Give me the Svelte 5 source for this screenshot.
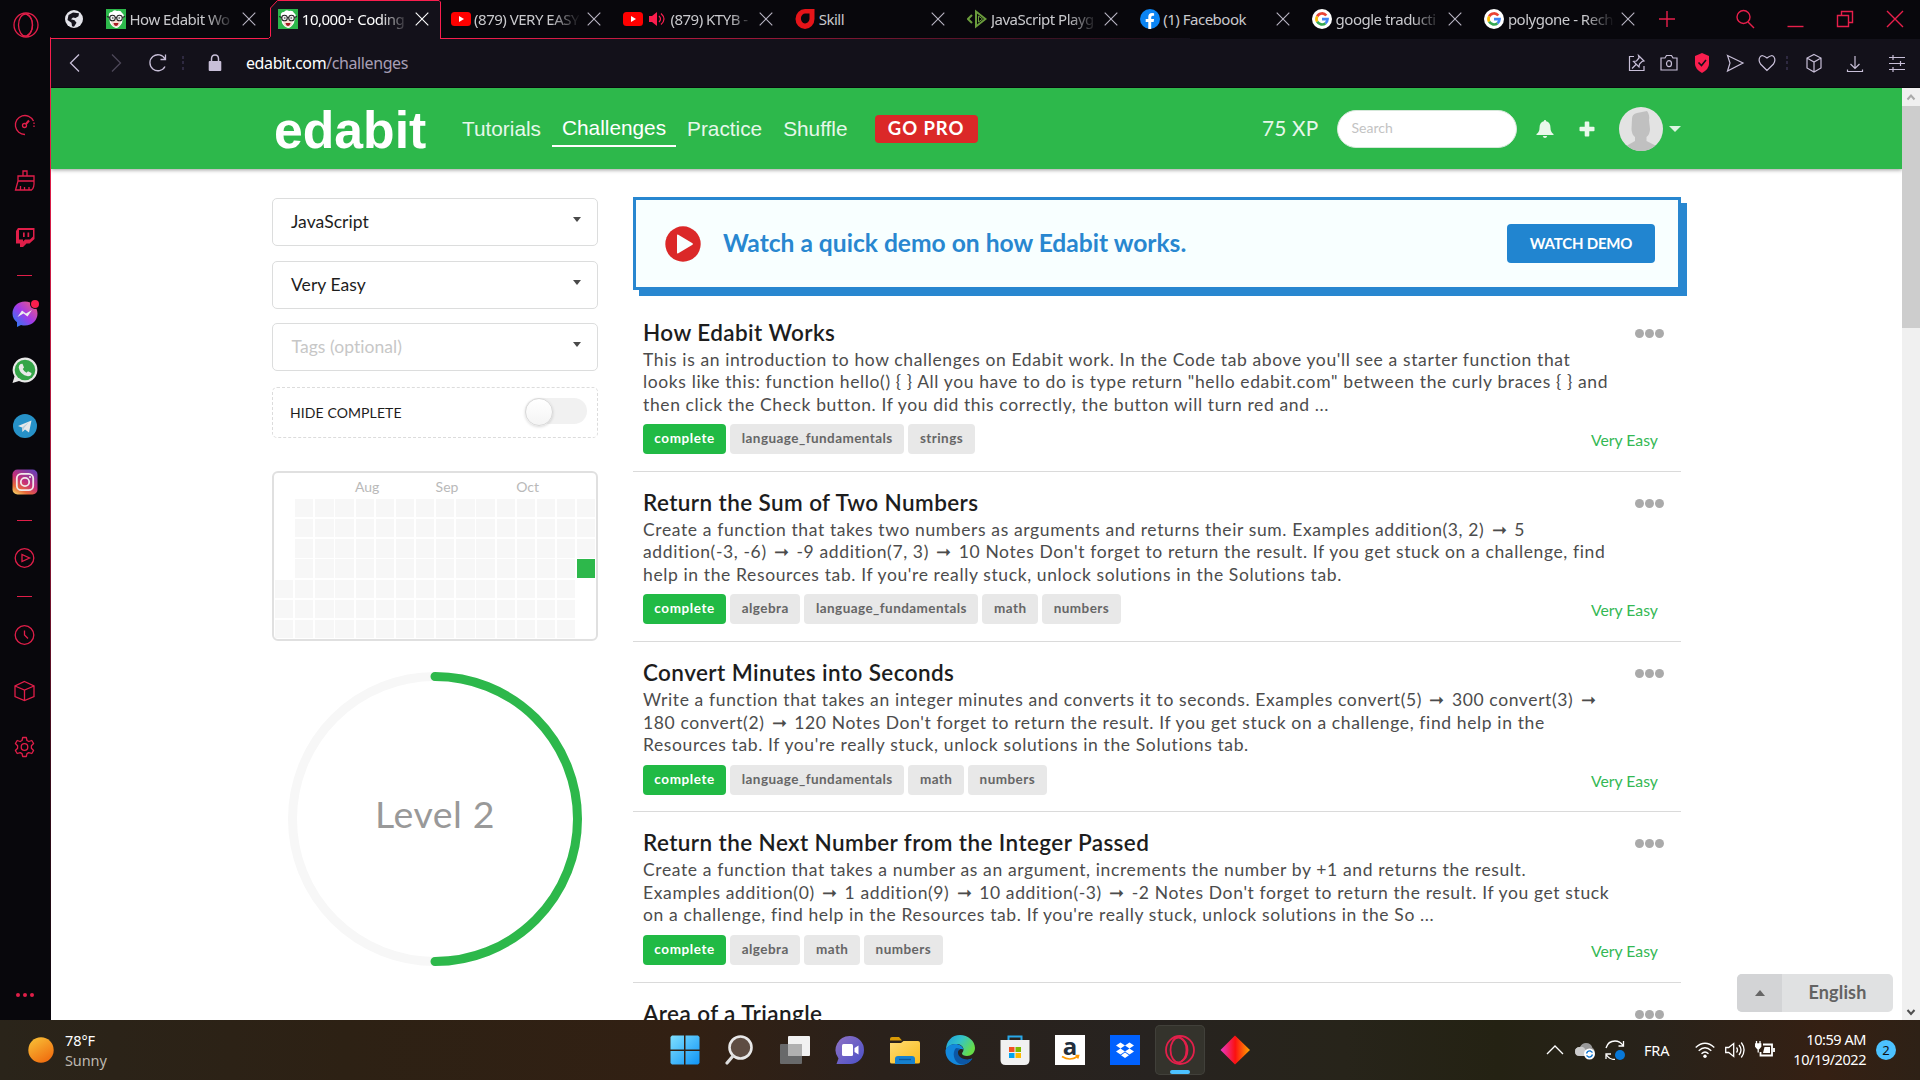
<script>
  const tabs = [
    { icon: 'edabit', title: 'How Edabit Wo', cut: true },
    { icon: 'edabit', title: '10,000+ Coding', active: true, cut: true },
    { icon: 'youtube', title: '(879) VERY EASY', cut: true },
    { icon: 'youtube', title: '(879) KTYB -', audio: true, cut: true },
    { icon: 'skill', title: 'Skill' },
    { icon: 'play-js', title: 'JavaScript Playg', cut: true },
    { icon: 'facebook', title: '(1) Facebook' },
    { icon: 'google', title: 'google traducti', cut: true },
    { icon: 'google', title: 'polygone - Rech', cut: true }
  ];

  const rail = [
    'speed', 'broom', 'twitch', '-', 'messenger', 'whatsapp', 'telegram', 'instagram',
    '-', 'player', '-', 'clock', 'cube', 'gear'
  ];

  const challenges = [
    {
      title: 'How Edabit Works',
      lines: [
        "This is an introduction to how challenges on Edabit work. In the Code tab above you'll see a starter function that",
        'looks like this: function hello() { } All you have to do is type return "hello edabit.com" between the curly braces { } and',
        'then click the Check button. If you did this correctly, the button will turn red and ...'
      ],
      tags: ['language_fundamentals', 'strings']
    },
    {
      title: 'Return the Sum of Two Numbers',
      lines: [
        'Create a function that takes two numbers as arguments and returns their sum. Examples addition(3, 2) ➞ 5',
        "addition(-3, -6) ➞ -9 addition(7, 3) ➞ 10 Notes Don't forget to return the result. If you get stuck on a challenge, find",
        "help in the Resources tab. If you're really stuck, unlock solutions in the Solutions tab."
      ],
      tags: ['algebra', 'language_fundamentals', 'math', 'numbers']
    },
    {
      title: 'Convert Minutes into Seconds',
      lines: [
        'Write a function that takes an integer minutes and converts it to seconds. Examples convert(5) ➞ 300 convert(3) ➞',
        "180 convert(2) ➞ 120 Notes Don't forget to return the result. If you get stuck on a challenge, find help in the",
        "Resources tab. If you're really stuck, unlock solutions in the Solutions tab."
      ],
      tags: ['language_fundamentals', 'math', 'numbers']
    },
    {
      title: 'Return the Next Number from the Integer Passed',
      lines: [
        'Create a function that takes a number as an argument, increments the number by +1 and returns the result.',
        "Examples addition(0) ➞ 1 addition(9) ➞ 10 addition(-3) ➞ -2 Notes Don't forget to return the result. If you get stuck",
        "on a challenge, find help in the Resources tab. If you're really stuck, unlock solutions in the So ..."
      ],
      tags: ['algebra', 'math', 'numbers']
    },
    { title: 'Area of a Triangle', lines: [], tags: [] }
  ];

  // Activity calendar: 16 weeks of 7 days, filled column by column.
  const cells = Array.from({ length: 112 }, (_, i) => {
    const week = Math.floor(i / 7);
    const day = i % 7;
    if ((week === 0 && day < 4) || (week === 15 && day > 3)) return 'none';
    return week === 15 && day === 3 ? 'done' : 'idle';
  });

  const apps = ['start', 'search', 'views', 'chat', 'folder', 'edge', 'store', 'amazon', 'dropbox', 'opera', 'diamond'];
</script>

{#snippet favicon(name)}
  <svg class="fav" viewBox="0 0 20 20">
    {#if name === 'edabit'}
      <rect width="20" height="20" fill="#2db84b" />
      <path d="M3 8Q2 3 6 3Q8 0 11 2Q15 1 16 4Q19 6 17 9L16 14Q13 19 10 19Q6 18 4 14Z" fill="#fff" />
      <path d="M5 11h10l-1 5q-4 4-8 0z" fill="#f6ddd3" />
      <circle cx="6.5" cy="9" r="2.8" fill="#eee" stroke="#222" stroke-width="1.1" />
      <circle cx="13.5" cy="9" r="2.8" fill="#eee" stroke="#222" stroke-width="1.1" />
      <circle cx="6.8" cy="9" r=".8" fill="#333" /><circle cx="13.2" cy="9" r=".8" fill="#333" />
      <path d="M1 7.500l2.700 1M19 7.500l-2.700 1M9.300 8.500h1.400" stroke="#222" stroke-width="1.1" />
      <path d="M7.500 14h5q-.5 3-2.500 3t-2.500-3z" fill="#a51d22" />
    {:else if name === 'youtube'}
      <rect y="3" width="20" height="14" rx="3.500" fill="#f00" />
      <path d="M8 7v6l5-3z" fill="#fff" />
    {:else if name === 'skill'}
      <path d="M10 0h9.500v10a9.500 10 0 1 1-9.500-10z" fill="#e51419" />
      <path d="M10.500 4.500h4V10a4.300 5 0 1 1-4-5.500z" fill="#09080d" />
    {:else if name === 'play-js'}
      <g fill="none" stroke="#6a9c3c" stroke-width="2">
        <path d="M5 6L1 10l4 4" /><path d="M9 2.500v15L18.500 10z" /><path d="M11.500 7v6l4-3z" stroke-width="1" />
      </g>
    {:else if name === 'facebook'}
      <circle cx="10" cy="10" r="10" fill="#0b84f3" />
      <path d="M8.300 20v-7H5.700v-3h2.600V8q0-3.900 3.800-3.900 1.200 0 2 .2v2.500h-1.400q-1.500 0-1.500 1.500V10h2.900l-.5 3h-2.400v7z" fill="#fff" />
    {:else if name === 'google'}
      <circle cx="10" cy="10" r="10" fill="#fff" />
      <g fill="none" stroke-width="2.700">
        <path d="M14.300 6.500A5.500 5.500 0 0 0 5.200 7.300" stroke="#ea4335" />
        <path d="M5.200 7.300A5.500 5.500 0 0 0 5.200 12.700" stroke="#fbbc05" />
        <path d="M5.200 12.700A5.500 5.500 0 0 0 13.500 14.200" stroke="#34a853" />
        <path d="M13.500 14.200A5.500 5.500 0 0 0 15.500 10.200H10" stroke="#4285f4" />
      </g>
    {/if}
  </svg>
{/snippet}

{#snippet railIcon(name)}
  <svg class="rail-icon" viewBox="0 0 26 26">
    {#if name === 'speed'}
      <g class="line">
        <path d="M13 22.500A9.500 9.500 0 1 1 21.500 9" /><path d="M22 10.500v6" stroke-dasharray="1.500 1.500" />
        <circle cx="12.500" cy="13.500" r="2" /><path d="M14 12l3-3.500" stroke-width="2" />
      </g>
    {:else if name === 'broom'}
      <g class="line"><path d="M6 8h16v5H6zM11 8V3h4v5M6 13L3.500 22h16q3-2 2.500-9M8.500 18v4M12.500 19v3M17 19v3" /></g>
    {:else if name === 'twitch'}
      <path d="M6 4h16.500v11l-5 4.500h-3L11 23H8v-3.500H4V7zM7 6v9.500h4v2l2-2h5l3-3V6zM11 8.500h1.700v4.500H11zm4.500 0h1.700v4.500h-1.700z" fill="#e01e49" fill-rule="evenodd" />
    {:else if name === 'messenger'}
      <path d="M13 .5C5.500.5.500 6 .5 12.500c0 4 1.700 6.500 4.500 8.800V26l4-2q2 .6 4 .6c7.500 0 12.500-5.500 12.500-12S20.500.5 13 .5z" fill="url(#msg)" />
      <path d="M5.500 16l4.500-6.500 4 3 6-3.500-4.500 6.500-4-3z" fill="#eee" />
      <circle cx="23" cy="3" r="5" fill="#08070c" /><circle cx="23" cy="3" r="4" fill="#fa1e4e" />
    {:else if name === 'whatsapp'}
      <path d="M13 .5a12.500 12.500 0 1 1-6 23.500L.5 26l2-6.500A12.500 12.500 0 0 1 13 .5z" fill="#e9e9e9" />
      <circle cx="13" cy="13" r="10.300" fill="#35a548" />
      <path d="M8.500 7l2-.3 1.500 3.800-1.200 1.500q1.200 2.500 3.700 3.700l1.500-1.500 3.500 1.800q0 3.200-3.500 3.200Q8 18 6.700 10.500 6.700 8 8.500 7z" fill="#e9e9e9" />
    {:else if name === 'telegram'}
      <circle cx="13" cy="13" r="12" fill="#2691c8" />
      <path d="M6 13l13.500-5.500L17 19.500l-4-3-2.500 2.500-.5-4.500z" fill="#e6e8ea" /><path d="M10 14.500l7-5.500-5 6-1.500 4z" fill="#b5cddb" />
    {:else if name === 'instagram'}
      <rect x=".5" y=".5" width="25" height="25" rx="5" fill="url(#insta)" />
      <g fill="none" stroke="#f1e9ea" stroke-width="1.800"><rect x="4.800" y="4.800" width="16.400" height="16.400" rx="4.500" /><circle cx="13" cy="13" r="4.200" /></g>
      <circle cx="18" cy="8" r="1.100" fill="#f1e9ea" />
    {:else if name === 'player'}
      <g class="line"><circle cx="12.500" cy="13" r="9.300" /><path d="M10 9.500v7l7.500-3.500z" /></g>
    {:else if name === 'clock'}
      <g class="line"><circle cx="12.500" cy="13" r="9.300" /><path d="M12.500 8.500V13l3.500 3.500" /></g>
    {:else if name === 'cube'}
      <g class="line"><path d="M12.500 3.500L22 8v10.500l-9.500 4-9.500-4V8zM3 8l9.500 4L22 8M12.500 12v10.500" /></g>
    {:else if name === 'gear'}
      <g class="line">
        <path d="M10.700 3.500h3.600l.7 3 1.800 1 3-1 1.800 3-2.200 2.200v2.500l2.200 2.300-1.800 3-3-.9-1.800 1-.7 2.900h-3.600l-.7-2.900-1.800-1-3 .9-1.800-3 2.200-2.300v-2.500L3.400 9.500l1.800-3 3 1 1.800-1z" stroke-linejoin="round" />
        <circle cx="12.500" cy="13" r="3.300" />
      </g>
    {/if}
  </svg>
{/snippet}

{#snippet appIcon(name)}
  <svg class="app-icon" viewBox="0 0 30 30">
    {#if name === 'start'}
      <g fill="url(#win)"><path d="M2 .5h12v14H.5V2zM15.500.5H28L29.500 2v12.500h-14zM.5 16H14v13.500H2L.5 28zM15.500 16h14v12L28 29.500H15.500z" /></g>
    {:else if name === 'search'}
      <circle cx="15.500" cy="12.500" r="11" fill="#5e4d43" stroke="#e8e8e8" stroke-width="2.600" />
      <path d="M8 21l-6 7" stroke="#ddd" stroke-width="3.200" stroke-linecap="round" />
    {:else if name === 'views'}
      <rect x="0" y="9" width="22" height="20" rx="1" fill="#68696a" />
      <rect x="8" y="1" width="22" height="20" rx="1" fill="#f1f1f1" /><path d="M8 9h14v12H8z" fill="#b0b0b0" />
    {:else if name === 'chat'}
      <path d="M15 1a14 14 0 1 1 0 28H1.500l2-5.500A14 14 0 0 1 15 1z" fill="url(#chat)" />
      <rect x="7" y="9" width="11" height="12" rx="1.500" fill="#fff" /><path d="M19.500 13l4-2.500v9l-4-2.500z" fill="#fff" />
    {:else if name === 'folder'}
      <path d="M0 4q0-2 2-2h7l3 3.500h-12z" fill="#d99a06" /><path d="M0 8h11l2.500-2H28q2 0 2 2v19q0 1.500-2 1.500H2Q0 28.500 0 27z" fill="url(#folder)" />
      <path d="M5 29v-5q0-3 3-3h14q3 0 3 3v5z" fill="#1681cf" /><path d="M9 24.500h12" stroke="#0a589c" stroke-width="1.300" />
    {:else if name === 'edge'}
      <path d="M1 15C1 6 7 0 15 0s15 6 15 13c0 5-4 8-8 8-3 0-5-1-5-2.500 0-1 1.500-1.500 1.500-4C18.500 11 15 9 11 9 6 9 2 12 1 15z" fill="url(#edgeTop)" />
      <path d="M.5 15Q3 9 10 9c5 0 8 2.500 8.500 5.500-2.500-1.500-6.500 0-6.500 5 0 4 4 7 9 6l6-2c-2 4-6.500 6.500-12 6.500C6 30 0 23 .5 15z" fill="#1388dc" />
      <path d="M11 13c-4 4-3 14 5 16.500 5 .5 9-2 11.500-6-6 2.500-14 0-14.500-5.500 0-2 .5-3.500 2-4.500z" fill="#0c57a5" />
    {:else if name === 'store'}
      <path d="M8.500 7V1.500h13V7" fill="none" stroke="#28a7e8" stroke-width="2" />
      <path d="M.5 5h29v20q0 5-5 5h-19q-5 0-5-5z" fill="#f1f1f1" />
      <path d="M9 12h5.500v5H9z" fill="#f25022" /><path d="M15.500 12H21v5h-5.500z" fill="#7fba00" /><path d="M9 18h5.500v5H9z" fill="#00a4ef" /><path d="M15.500 18H21v5h-5.500z" fill="#ffb900" />
    {:else if name === 'amazon'}
      <rect width="30" height="30" fill="#fff" />
      <text x="15" y="19.500" text-anchor="middle" font-family="Open Sans, sans-serif" font-weight="700" font-size="24" fill="#232f3e">a</text>
      <path d="M7 21.500q8 5 15.500 0M20.500 20.500h3l-.8 3" fill="none" stroke="#f90" stroke-width="1.700" />
    {:else if name === 'dropbox'}
      <rect width="30" height="30" fill="#0061fe" />
      <path d="M10.500 7.500l4.500 3-4.500 3-4.500-3zM19.500 7.500l4.500 3-4.500 3-4.500-3zM10.500 13.500l4.500 3-4.500 3-4.500-3zM19.500 13.500l4.500 3-4.500 3-4.500-3zM15 17.500l4 2.700-4 2.700-4-2.700z" fill="#fff" />
    {:else if name === 'opera'}
      <g fill="none" stroke="#e2204b" stroke-width="1.800"><ellipse cx="15" cy="15" rx="14" ry="14" /><ellipse cx="13.500" cy="15" rx="8" ry="12.500" /><path d="M16 3.500q6.500 3 6.500 11.500T16 26.500" /></g>
    {:else if name === 'diamond'}
      <path d="M15 .5L30 15 15 29.500.5 15z" fill="url(#diamond)" />
    {/if}
  </svg>
{/snippet}

<svg class="defs" width="0" height="0">
  <linearGradient id="msg" x1="1" y1="0" x2="0" y2="1"><stop offset="0" stop-color="#f7616e" /><stop offset=".5" stop-color="#a339e8" /><stop offset="1" stop-color="#1286f4" /></linearGradient>
  <linearGradient id="insta" x1=".8" y1="0" x2=".2" y2="1"><stop offset="0" stop-color="#6a40b5" /><stop offset=".5" stop-color="#c52f7a" /><stop offset=".8" stop-color="#ea6a3a" /><stop offset="1" stop-color="#f2c060" /></linearGradient>
  <linearGradient id="win" x1="0" y1="0" x2="1" y2="1"><stop offset="0" stop-color="#7fe0ff" /><stop offset="1" stop-color="#0f93f5" /></linearGradient>
  <linearGradient id="chat" x1="0" y1="0" x2="1" y2="1"><stop offset="0" stop-color="#8f72c4" /><stop offset="1" stop-color="#4a50c8" /></linearGradient>
  <linearGradient id="folder" x1="0" y1="0" x2="1" y2="1"><stop offset="0" stop-color="#ffdb73" /><stop offset="1" stop-color="#fabc1c" /></linearGradient>
  <linearGradient id="edgeTop" x1="0" y1="0" x2="1" y2=".5"><stop offset="0" stop-color="#1a9de0" /><stop offset=".5" stop-color="#34c3c8" /><stop offset="1" stop-color="#66dd48" /></linearGradient>
  <linearGradient id="diamond"><stop offset="0" stop-color="#e838c8" /><stop offset=".5" stop-color="#fb1010" /><stop offset="1" stop-color="#ffa600" /></linearGradient>
  <linearGradient id="sun" x1=".2" y1="0" x2=".8" y2="1"><stop offset="0" stop-color="#f8bd35" /><stop offset="1" stop-color="#f0690d" /></linearGradient>
  <linearGradient id="fade" gradientUnits="userSpaceOnUse" x1="440" y1="0" x2="1190" y2="0"><stop offset="0" stop-color="#fa1e4e" /><stop offset=".25" stop-color="#c01a40" /><stop offset="1" stop-color="#12101a" /></linearGradient>
</svg>

<div class="screen">
  <div class="window">
    <aside class="rail">
      <svg class="brand" viewBox="0 0 26 26"><g class="line"><circle cx="13" cy="13" r="12" /><ellipse cx="12.500" cy="13" rx="7" ry="11" /><path d="M14 2.500q5.500 3 5.500 10.500T14 23.500" /></g></svg>
      <div class="rail-items">
        {#each rail as item}
          {#if item === '-'}
            <div class="rail-gap"><span></span></div>
          {:else}
            <div class="rail-slot">{@render railIcon(item)}</div>
          {/if}
        {/each}
      </div>
      <div class="more"><i></i><i></i><i></i></div>
    </aside>

    <div class="main">
      <div class="tabbar">
        <svg class="outline" viewBox="50 0 1870 40">
          <path d="M268.500 40l2-3V8l7-7.500h162.500V40z" fill="#13111a" />
          <path d="M50 38.500h218.500l2-2V8l7-7.500h161.500l1.500 1.500v36.500" fill="none" stroke="#fa1e4e" />
          <rect x="440" y="38" width="750" height="1" fill="url(#fade)" />
        </svg>
        <div class="pinned">
          <svg viewBox="0 0 18 18"><circle cx="9" cy="9" r="9" fill="#e3e3ea" /><path d="M8 2.500l6 .8-.5 3-3 1.700-2.500-.5-2 1.700 3.500 1 2 2.500-2.500 4-2-.5-.5-3.500L2.500 10l1-5z" fill="#15131c" /></svg>
        </div>
        {#each tabs as tab}
          <div class="tab" class:active={tab.active}>
            {@render favicon(tab.icon)}
            {#if tab.audio}
              <svg class="audio" viewBox="0 0 16 16"><path d="M0 5h3l5-4v14l-5-4H0z" fill="#fa1e4e" /><path d="M10 5q3 3 0 6M12 2.500q6 5.500 0 11" fill="none" stroke="#fa1e4e" stroke-width="1.200" /></svg>
            {/if}
            <span class="tab-title" class:cut={tab.cut}>{tab.title}</span>
            <svg class="tab-x" viewBox="0 0 14 14"><path d="M.7.7l12.600 12.600M13.300.7L.7 13.300" /></svg>
          </div>
        {/each}
        <div class="controls">
          <svg class="plus" viewBox="0 0 20 20"><path d="M10 2v16M2 10h16" /></svg>
          <svg viewBox="0 0 20 20"><circle cx="8.500" cy="8" r="6.500" /><path d="M13 13l6 6" /></svg>
          <svg viewBox="0 0 20 20"><path d="M2.500 17.500h16" /></svg>
          <svg viewBox="0 0 20 20"><path d="M2.500 6.500h11v11h-11zM6.500 6.500v-4h11v11h-4" /></svg>
          <svg viewBox="0 0 20 20"><path d="M2 2l16 16M18 2L2 18" /></svg>
        </div>
      </div>

      <div class="addressbar">
        <svg class="nav-icon" viewBox="0 0 20 20"><path d="M14 1.500L5.500 10l8.500 8.500" /></svg>
        <svg class="nav-icon dim" viewBox="0 0 20 20"><path d="M6 1.500l8.500 8.500L6 18.500" /></svg>
        <svg class="nav-icon reload" viewBox="0 0 20 20"><path d="M17 13.500A8 8 0 1 1 17 6M17.500 1.500v5h-5" /></svg>
        <span class="divider"></span>
        <svg class="lock" viewBox="0 0 14 18"><path d="M3.500 8V5Q3.500 1 7 1t3.500 4v3" fill="none" stroke="#c8bfd8" stroke-width="1.500" /><rect x=".7" y="7" width="12.600" height="10" rx="1" fill="#c8bfd8" /></svg>
        <span class="url"><b>edabit.com</b>/challenges</span>
        <div class="actions">
          <svg viewBox="0 0 20 20"><path d="M7 3.500H2.500v14H17V13M11.500 2.500L17 8l-2 .5-2.500 2.500-.5 3L6.500 8.500l3-.5L12 5zM9 11.500l-4 4" /></svg>
          <svg viewBox="0 0 20 20"><path d="M2 5h4l1.500-2.500h5L14 5h4v12H2z" /><ellipse cx="10" cy="10.700" rx="2.500" ry="3" /></svg>
          <svg viewBox="0 0 20 20"><path d="M10 0l7 3v8q0 5-7 9-7-4-7-9V3z" fill="#fa1e4e" stroke="none" /><path d="M6.500 9.500l3 3 4.500-5.500" stroke="#13111a" stroke-width="1.600" /></svg>
          <svg viewBox="0 0 20 20"><path d="M2.500 2.500L18 10 2.500 18l2.500-8z" /></svg>
          <svg viewBox="0 0 20 20"><path d="M10 17.500L3.500 11Q1 7 3 4t7 1q5-4 7-1t-.5 7z" /></svg>
          <span class="divider"></span>
          <svg viewBox="0 0 20 20"><path d="M10 1.500l7 3.500v10l-7 4-7-4V5zM3 5l7 4 7-4M10 9v10" /></svg>
          <svg viewBox="0 0 20 20"><path d="M10 3v12M5.500 11l4.500 4.500 4.500-4.500M2.500 16.500v2h15v-2" /></svg>
          <svg viewBox="0 0 20 20"><path d="M2 4.500h16M2 10.500h16M2 16.500h16M6 2v5M13.500 8v5M6 14v5" /></svg>
        </div>
      </div>

      <div class="viewport">
        <div class="page">
          <header class="topbar">
            <div class="logo">edabit</div>
            <nav>
              <a>Tutorials</a><a class="current">Challenges</a><a>Practice</a><a>Shuffle</a>
            </nav>
            <span class="gopro">GO PRO</span>
            <div class="account">
              <span class="xp">75 XP</span>
              <div class="search">Search</div>
              <svg class="bell" viewBox="0 0 18 18"><path d="M9 0q1.200 0 1.200 1.300Q14.500 2.500 14.500 8q0 4 3 6v1H.5v-1q3-2 3-6 0-5.500 4.300-6.700Q7.800 0 9 0zM6.800 16h4.400q-.5 2-2.200 2t-2.200-2z" /></svg>
              <svg class="add" viewBox="0 0 16 16"><path d="M5.700 1.500Q5.700.500 6.500.500h3q.8 0 .8 1v4.200h4.200q1 0 1 .8v3q0 .8-1 .8h-4.200v4.200q0 1-.8 1h-3q-.8 0-.8-1v-4.200H1.500q-1 0-1-.8v-3q0-.8 1-.8h4.200z" /></svg>
              <svg class="avatar" viewBox="0 0 44 44"><circle cx="22" cy="22" r="22" fill="#e3e3e3" /><path d="M13 12q0-5 5-6l10-2q3 4 2 9l1 9q0 5-3.500 8v4l9 4.500q-6 5.500-14.500 5.500T8 38.500l8-4.500v-4q-3.500-3-3.500-8z" fill="#c0c0c0" /></svg>
              <span class="caret"></span>
            </div>
          </header>

          <div class="content">
            <aside class="filters">
              <div class="select">JavaScript<i></i></div>
              <div class="select">Very Easy<i></i></div>
              <div class="select empty">Tags (optional)<i></i></div>
              <div class="hide">HIDE COMPLETE<span class="toggle"></span></div>
              <div class="calendar">
                <div class="months"><span>Aug</span><span>Sep</span><span>Oct</span></div>
                <div class="cells">
                  {#each cells as cell}<i class={cell}></i>{/each}
                </div>
              </div>
              <div class="level">
                <svg viewBox="0 0 294 294">
                  <circle cx="147" cy="147" r="142.500" fill="none" stroke="#f7f7f7" stroke-width="9" />
                  <path d="M147 4.500a142.500 142.500 0 0 1 0 285" fill="none" stroke="#2db84b" stroke-width="9" stroke-linecap="round" />
                </svg>
                <span>Level 2</span>
              </div>
            </aside>

            <section class="feed">
              <div class="demo">
                <svg viewBox="0 0 36 36"><circle cx="18" cy="18" r="17.700" fill="#db2828" /><path d="M12 9.500q0-1.500 1.300-.7l14.200 8.500q1 .7 0 1.400l-14.200 8.500q-1.300.8-1.300-.7z" fill="#f8ffff" /></svg>
                <strong>Watch a quick demo on how Edabit works.</strong>
                <span class="watch">WATCH DEMO</span>
              </div>
              {#each challenges as c}
                <article>
                  <div class="head"><h2>{c.title}</h2><span class="dots"><i></i><i></i><i></i></span></div>
                  <div class="text">
                    {#each c.lines as line}
                      <p>{#each line.split('➞') as part, n}{#if n > 0}<span class="arrow">➞</span>{/if}{part}{/each}</p>
                    {/each}
                  </div>
                  {#if c.tags.length}
                    <div class="tags">
                      <span class="tag complete">complete</span>
                      {#each c.tags as tag}<span class="tag">{tag}</span>{/each}
                      <span class="difficulty">Very Easy</span>
                    </div>
                  {/if}
                </article>
              {/each}
            </section>
          </div>
          <div class="language"><span class="up"><i></i></span><span class="name">English</span></div>
        </div>
        <div class="scrollbar">
          <svg viewBox="0 0 18 18"><path d="M5.500 11.500L9 7.500l3.500 4" stroke="#aaa" /></svg>
          <div class="thumb"></div>
          <svg viewBox="0 0 18 18"><path d="M5.500 8L9 12l3.500-4" stroke="#505050" /></svg>
        </div>
      </div>
    </div>
  </div>

  <footer class="taskbar">
    <div class="weather">
      <svg viewBox="0 0 26 26"><circle cx="13" cy="13" r="12.700" fill="url(#sun)" /></svg>
      <div><p>78°F</p><p class="soft">Sunny</p></div>
    </div>
    <div class="apps">
      {#each apps as app}
        <div class="app" class:running={app === 'opera'}>{@render appIcon(app)}</div>
      {/each}
    </div>
    <div class="tray">
      <svg class="chev" viewBox="0 0 20 20"><path d="M2 14l8-8 8 8" /></svg>
      <svg viewBox="0 0 20 20"><path d="M5 16q-5 0-5-4.500T5 7q2-4 6-4 5 0 6.500 5 2.500 1 2 5-1 3-3 3z" fill="#999" stroke="none" /><path d="M5 16q-5 0-5-4.500T5 7q4-1 6 4l3 5z" fill="#ccc" stroke="none" /><circle cx="14.500" cy="14" r="5.500" fill="#fff" stroke="none" /><path d="M11.500 13.500q1-3 4-2.500l2 1.500M17.500 14.500q-1 3-4 2.500l-2-1.500" stroke="#0a74d0" /></svg>
      <svg viewBox="0 0 20 20"><path d="M1 8Q3 1 10 1q5 0 8 4.500M18.500 1v5h-5M1 19v-5h5M1.500 15q3 4.500 8.500 4.500" /><circle cx="15" cy="15" r="5" fill="#0878d8" stroke="none" /></svg>
      <span class="lang">FRA</span>
      <svg viewBox="0 0 20 20"><path d="M.7 7.500q9.300-8.500 18.600 0M3.700 10.700q6.300-6 12.600 0M6.500 13.700q3.500-3.500 7 0" /><circle cx="10" cy="16.300" r="1.700" fill="#fff" stroke="none" /></svg>
      <svg viewBox="0 0 20 20"><path d="M.7 7.500h3l5-4v13l-5-4h-3zM11.500 7.500q2 2.500 0 5M14 5q4 5 0 10M16.300 2.500q5.500 7.500 0 15" /></svg>
      <svg viewBox="0 0 20 20"><path d="M8 4.500h9v11H5.500V12M19 8v4" stroke-width="1.800" /><path d="M9.500 7H15v6H8z" fill="#fff" stroke="none" /><path d="M1.500 1v3M5 1v3M.7 4h5v2.500L4 8.500H2.500L.7 6.500zM3.200 8.500v4" fill="#fff" /></svg>
      <div class="clock"><p>10:59 AM</p><p>10/19/2022</p></div>
      <span class="badge">2</span>
    </div>
  </footer>
</div>

<style>
  :global(body) { margin: 0; overflow: hidden; }
  .screen { width: 1920px; height: 1080px; display: flex; flex-direction: column; overflow: hidden; font-family: Lato, sans-serif; }
  .screen * { box-sizing: border-box; }
  .defs { position: absolute; }
  p, h2 { margin: 0; }
  svg { display: block; flex: none; }
  .window { height: 1020px; display: flex; background: #08070c; }

  .rail { width: 51px; flex: none; height: 1020px; display: flex; flex-direction: column; align-items: center; padding: 12px 1px 23px 0; border-right: 1px solid; border-image: linear-gradient(#fa1e4e00 3.700%, #fa1e4e 3.800%, #a51a3d 45%, #3b0b1b 75%, #0a070d) 1; }
  .line { fill: none; stroke: #e01e49; stroke-width: 1.300; }
  .brand { width: 26px; height: 26px; margin-left: 2px; }
  .rail-items { margin-top: 59px; display: flex; flex-direction: column; }
  .rail-slot { height: 56.200px; display: flex; align-items: center; }
  .rail-icon { width: 26px; height: 26px; overflow: visible; }
  .rail-gap { height: 20px; display: flex; align-items: center; justify-content: center; }
  .rail-gap span { width: 15px; height: 1px; background: #e01e49; }
  .more { margin-top: auto; display: flex; gap: 3px; }
  .more i { width: 4px; height: 4px; border-radius: 50%; background: #e01e49; }

  .main { flex: 1; display: flex; flex-direction: column; min-width: 0; }
  .tabbar { position: relative; height: 39px; display: flex; font: 15px "Noto Sans", sans-serif; color: #c9c9cd; }
  .outline { position: absolute; left: -1px; top: 0; width: 1870px; height: 40px; }
  .pinned { width: 47px; padding: 10px 0 0 14px; }
  .pinned svg { width: 18px; height: 18px; }
  .tab { position: relative; width: 172.300px; flex: none; height: 38px; display: flex; align-items: center; padding: 0 14px 0 8px; }
  .fav { width: 20px; height: 20px; }
  .audio { width: 16px; height: 16px; margin: 0 2px 0 6px; }
  .tab-title { flex: 1; min-width: 0; margin: 0 3px 0 3.500px; white-space: nowrap; letter-spacing: -0.5px; }
  .cut { mask-image: linear-gradient(90deg, #000 70%, transparent 97%); }
  .active .tab-title { color: #fff; }
  .tab-x { width: 14px; height: 14px; stroke: #b9b5c4; stroke-width: 1.100; fill: none; }
  .active .tab-x { stroke: #fff; }
  .controls { position: relative; margin-left: auto; display: flex; gap: 30px; padding: 9px 15px 0 0; fill: none; stroke: #e81f4b; stroke-width: 1.400; }
  .controls svg { width: 20px; height: 20px; }
  .controls .plus { margin-right: 28px; }

  .addressbar { height: 49px; flex: none; display: flex; align-items: center; background: #13111a; padding-left: 14px; border-bottom: 1px solid #0b090f; }
  .nav-icon { width: 20px; height: 20px; margin-right: 21px; fill: none; stroke: #c8bfd8; stroke-width: 1.300; }
  .dim { stroke: #4c4758; }
  .reload { margin: 0 14px 0 1px; }
  .divider { width: 2px; height: 14px; background: repeating-linear-gradient(#2e2940 0 3px, transparent 3px 5.500px); }
  .lock { width: 14px; height: 18px; margin: 0 24px 0 24px; }
  .url { font: 16px "Noto Sans", sans-serif; letter-spacing: -0.4px; color: #a79fb5; }
  .url b { font-weight: 400; color: #fff; }
  .actions { margin-left: auto; display: flex; align-items: center; gap: 12.700px; padding-right: 13px; fill: none; stroke: #c8bfd8; stroke-width: 1.200; }
  .actions svg { width: 20px; height: 20px; }
  .actions .divider { margin: 0 3px 0 -4px; }
  .actions .divider ~ svg + svg { margin-left: 9px; }

  .viewport { flex: 1; min-height: 0; display: flex; background: #fff; }
  .page { position: relative; flex: 1; overflow: hidden; }
  .topbar { position: relative; height: 81px; background: #2db84b; box-shadow: 0 1px 4px rgba(0, 0, 0, .4); display: flex; align-items: center; padding: 0 221px 0 223px; color: #e6f7ea; }
  .logo { width: 178px; font: 700 51.700px/60px "Liberation Sans", sans-serif; color: #fff; padding-top: 2px; }
  nav { display: flex; font: 20.800px/26px "Liberation Sans", sans-serif; }
  nav a { padding: 0 10px; margin-right: 1px; height: 36px; padding-top: 5px; }
  nav .current { color: #fff; border-bottom: 2px solid #fff; padding-top: 4px; }
  .gopro { margin-left: 16px; width: 103px; height: 28px; border-radius: 4px; background: #db2828; color: #fff; font: 700 18.500px/27px Lato, sans-serif; letter-spacing: .9px; text-align: center; }
  .account { margin-left: auto; display: flex; align-items: center; }
  .xp { font-size: 20.800px; line-height: 24px; padding-bottom: 1px; width: 75px; letter-spacing: .2px; }
  .search { width: 180px; height: 38px; border-radius: 19px; background: #fff; border: 1px solid #d5e8d9; color: #c3c3c3; font-size: 14px; line-height: 34px; padding-left: 13.500px; }
  .account svg { fill: #e9f8ec; }
  .bell { width: 18px; height: 18px; margin-left: 19px; }
  .add { width: 16px; height: 16px; margin-left: 25px; }
  .avatar { width: 44px; height: 44px; margin-left: 24px; }
  .caret { margin-left: 6px; border: 6px solid transparent; border-top: 6px solid #dcf4e1; border-bottom: 0; }

  .content { display: flex; gap: 35px; padding: 28px 0 0 221px; }
  .filters { width: 326px; padding-top: 1px; display: flex; flex-direction: column; }
  .select { height: 48px; margin-bottom: 14.500px; border: 1px solid #dcdddd; border-radius: 5px; padding: 0 16px 1px 18px; display: flex; justify-content: space-between; align-items: center; font-size: 17.500px; letter-spacing: .06px; color: #1d1d1d; }
  .select i { border: 4.500px solid transparent; border-top: 5px solid #4a4a4a; border-bottom: 0; margin-top: -4px; }
  .empty { color: #c7c7c7; padding-left: 18.500px; }
  .hide { margin-top: 1.500px; height: 51px; border: 1px dashed #dcdcdc; border-radius: 5px; display: flex; align-items: center; justify-content: space-between; padding: 0 10px 0 17px; font-size: 14px; letter-spacing: .1px; color: #1d1d1d; }
  .toggle { width: 62px; height: 26px; margin-top: -3px; border-radius: 13px; background: #f1f1f1; }
  .toggle::before { content: ""; display: block; width: 26px; height: 26px; border-radius: 50%; background: linear-gradient(#fff, #f4f4f4); border: 1px solid #d8d8d8; box-shadow: 0 1px 3px rgba(0, 0, 0, .15); }
  .calendar { margin-top: 33px; height: 170px; border: 2px solid #e0e0e0; border-radius: 6px; padding: 3px 1px 0; }
  .months { height: 23px; display: flex; gap: 80.600px; padding-left: 80px; font-size: 14px; line-height: 22px; color: #b9b9b9; }
  .months span { width: 0; }
  .cells { display: grid; grid-auto-flow: column; grid-template-rows: repeat(7, 18.300px); grid-auto-columns: 18.300px; gap: 1.850px; }
  .idle { background: #f7f7f7; }
  .done { background: #2db84b; }
  .level { margin: 31px 0 0 16px; width: 294px; height: 294px; display: grid; place-items: center; }
  .level svg, .level span { grid-area: 1 / 1; }
  .level span { font-size: 37.500px; letter-spacing: .55px; color: #999; margin-top: -12px; }

  .feed { width: 1048px; }
  .demo { height: 93px; margin-bottom: 11.600px; border: 3px solid #2887d0; background: #f8ffff; box-shadow: 6px 6px 0 #2887d0; display: flex; align-items: center; padding: 0 23px 0 29px; color: #2887d0; }
  .demo svg { width: 36px; height: 36px; }
  .demo strong { font-size: 24.600px; margin: -2px 0 0 22px; white-space: nowrap; }
  .watch { margin-left: auto; width: 148px; height: 39px; border-radius: 4px; background: #2185d0; color: #fff; font-weight: 700; font-size: 15px; letter-spacing: -.2px; line-height: 39px; text-align: center; }
  article { height: 170.250px; border-bottom: 1px solid #dadada; padding: 18px 10px 0; }
  .head { height: 29px; display: flex; justify-content: space-between; }
  h2 { font-size: 22.500px; line-height: 26.500px; font-weight: 600; letter-spacing: .4px; color: #1d1d1d; white-space: nowrap; }
  .dots { display: flex; gap: 1px; padding: 9px 7px 0 0; }
  .dots i { width: 9px; height: 9px; border-radius: 50%; background: #aaa; }
  .text { font-size: 17.500px; line-height: 22.500px; letter-spacing: .62px; color: #4c4c4c; white-space: nowrap; }
  .arrow { display: inline-block; line-height: 1; padding: 0 1.800px 0 2.200px; }
  .tags { display: flex; gap: 4px; margin-top: 8px; }
  .tag { height: 30px; border-radius: 4px; background: #e8e8e8; color: #666; font-weight: 700; font-size: 13.500px; line-height: 29.500px; padding: 0 11.600px; letter-spacing: .44px; }
  .complete { background: #21ba45; color: #fff; letter-spacing: .6px; padding: 0 11.300px; }
  .difficulty { margin: 6px 13px 0 auto; font-size: 15.800px; line-height: 20px; color: #34b853; }

  .language { position: absolute; right: 9px; bottom: 8px; width: 156px; height: 38px; border-radius: 5px; overflow: hidden; display: flex; background: #e0e1e2; }
  .up { width: 45px; background: #d3d4d6; display: grid; place-items: center; }
  .up i { border: 5px solid transparent; border-bottom: 6px solid #666; border-top: 0; }
  .name { flex: 1; text-align: center; font-weight: 700; font-size: 18px; letter-spacing: .15px; line-height: 36px; color: #636363; }
  .scrollbar { width: 18px; flex: none; background: #f0f0f0; display: flex; flex-direction: column; }
  .scrollbar svg { width: 18px; height: 18px; fill: none; stroke-width: 2; }
  .scrollbar svg:last-child { margin-top: auto; }
  .thumb { height: 222px; background: #cdcdcd; }

  .taskbar { height: 60px; display: flex; background: linear-gradient(90deg, #2a241a 0, #2d2114 18%, #322013 36%, #2a211b 46%, #272320 60%, #27241a 70%, #242213 78%, #28221a 86%, #352013 95%, #2e2116); font-family: "Noto Sans", sans-serif; color: #fff; }
  .weather { width: 660px; display: flex; align-items: center; padding-left: 28px; gap: 11px; font-size: 14.500px; line-height: 20px; letter-spacing: -.1px; }
  .weather svg { width: 26px; height: 26px; }
  .soft { color: #bdb8b0; }
  .apps { display: flex; gap: 5px; padding-top: 5px; }
  .app { position: relative; width: 50px; height: 50px; padding: 10px; border-radius: 5px; }
  .running { background: #34332c; box-shadow: inset 0 0 0 1px #41403a; }
  .running::after { content: ""; position: absolute; left: 15px; bottom: 1px; width: 20px; height: 4px; border-radius: 2px; background: #4cc2ff; }
  .app-icon { width: 30px; height: 30px; }
  .tray { margin-left: auto; padding-right: 24px; display: flex; align-items: center; gap: 10px; font-size: 14.500px; }
  .tray svg { width: 20px; height: 20px; fill: none; stroke: #fff; stroke-width: 1.300; }
  .lang { width: 27px; margin: 0 14px 0 9px; letter-spacing: -.2px; }
  .clock { width: 81px; text-align: right; line-height: 20px; letter-spacing: -.45px; white-space: nowrap; display: flex; flex-direction: column; align-items: flex-end; padding-bottom: 2px; }
  .badge { width: 20px; height: 20px; border-radius: 50%; background: #4cc2ff; color: #111; font-size: 13px; line-height: 20px; text-align: center; }
</style>
